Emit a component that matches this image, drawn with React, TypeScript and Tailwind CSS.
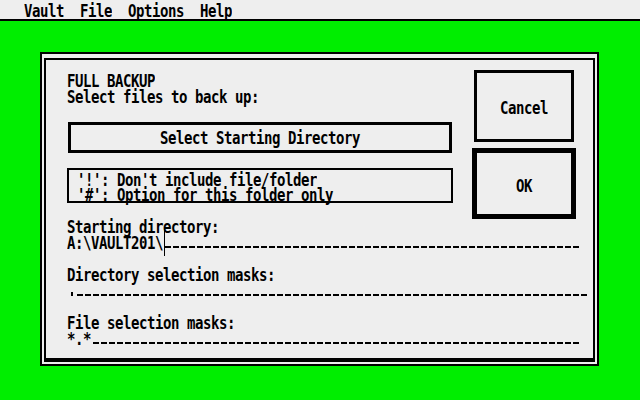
import React from "react";

// one 8x16 text cell row, stretched up to look like the ST system font
const T = ({ children, className = "" }: { children: React.ReactNode; className?: string }) => (
  <span className={`inline-block h-4 leading-4 whitespace-pre origin-[0_4.7px] scale-y-[1.32] ${className}`}>
    {children}
  </span>
);

const Dashes = ({ n }: { n: number }) => (
  <>
    {Array.from({ length: n }, (_, i) => (
      <span key={i} className="w-2 h-4 shrink-0 pt-[13px] pl-[2px]">
        <span className="block w-[6px] h-[2px] bg-black" />
      </span>
    ))}
  </>
);

const MenuBar = () => (
  <div className="h-[21px] bg-[#eeeeee] border-b-2 border-black flex gap-4 pl-6 pt-px">
    <T>Vault</T>
    <T>File</T>
    <T>Options</T>
    <T>Help</T>
  </div>
);

const App = () => {
  return (
    <div className="w-[640px] h-[400px] overflow-hidden bg-[#00ee00] text-black font-bold text-[14px] tracking-[-0.43px] font-['DejaVu_Sans_Mono',monospace]">
      <MenuBar />

      <div className="ml-[40px] mt-[31px] w-[559px] border-2 border-black bg-[#eeeeee] pt-[4px] px-[2px] pb-[2px]">
        <div className="border-2 border-b-4 border-black pb-[13px]">
          <div className="flex">
            <div className="flex flex-col pl-[21px] pt-[11px]">
              <T>FULL BACKUP</T>
              <T>Select files to back up:</T>
              <div className="mt-[19px] ml-px w-[384px] h-[31px] border-[3px] border-black flex justify-center pt-[3px]">
                <T>Select Starting Directory</T>
              </div>
              <div className="mt-[15px] w-[386px] h-[35px] border-2 border-black flex flex-col">
                <T>{" '!': Don't include file/folder"}</T>
                <T className="-mt-px">{" '#': Option for this folder only"}</T>
              </div>
            </div>

            <div className="ml-[19px] w-[104px] flex flex-col items-center pt-[10px] -mb-[16px]">
              <div className="w-[100px] h-[72px] border-[3px] border-black flex items-center justify-center">
                <T>Cancel</T>
              </div>
              <div className="mt-[6px] w-[104px] h-[71px] border-[5px] border-black flex items-center justify-center">
                <T>OK</T>
              </div>
            </div>
          </div>

          <div className="mt-[14px] pl-[21px] flex flex-col">
            <T>Starting directory:</T>
            <div className="relative flex h-4">
              <T>{"A:\\VAULT201\\"}</T>
              <span className="absolute left-[97px] top-[-6px] w-px h-[29px] bg-black" />
              <Dashes n={52} />
            </div>

            <T className="mt-4">Directory selection masks:</T>
            <div className="flex h-4">
              <span className="w-2 h-4 shrink-0 pt-[11px] pl-[4px]">
                <span className="block w-[2px] h-[4px] bg-black" />
              </span>
              <Dashes n={64} />
            </div>

            <T className="mt-4">File selection masks:</T>
            <div className="flex h-4">
              <T>*.*</T>
              <Dashes n={61} />
            </div>
          </div>
        </div>
      </div>
    </div>
  );
};

export default App;
